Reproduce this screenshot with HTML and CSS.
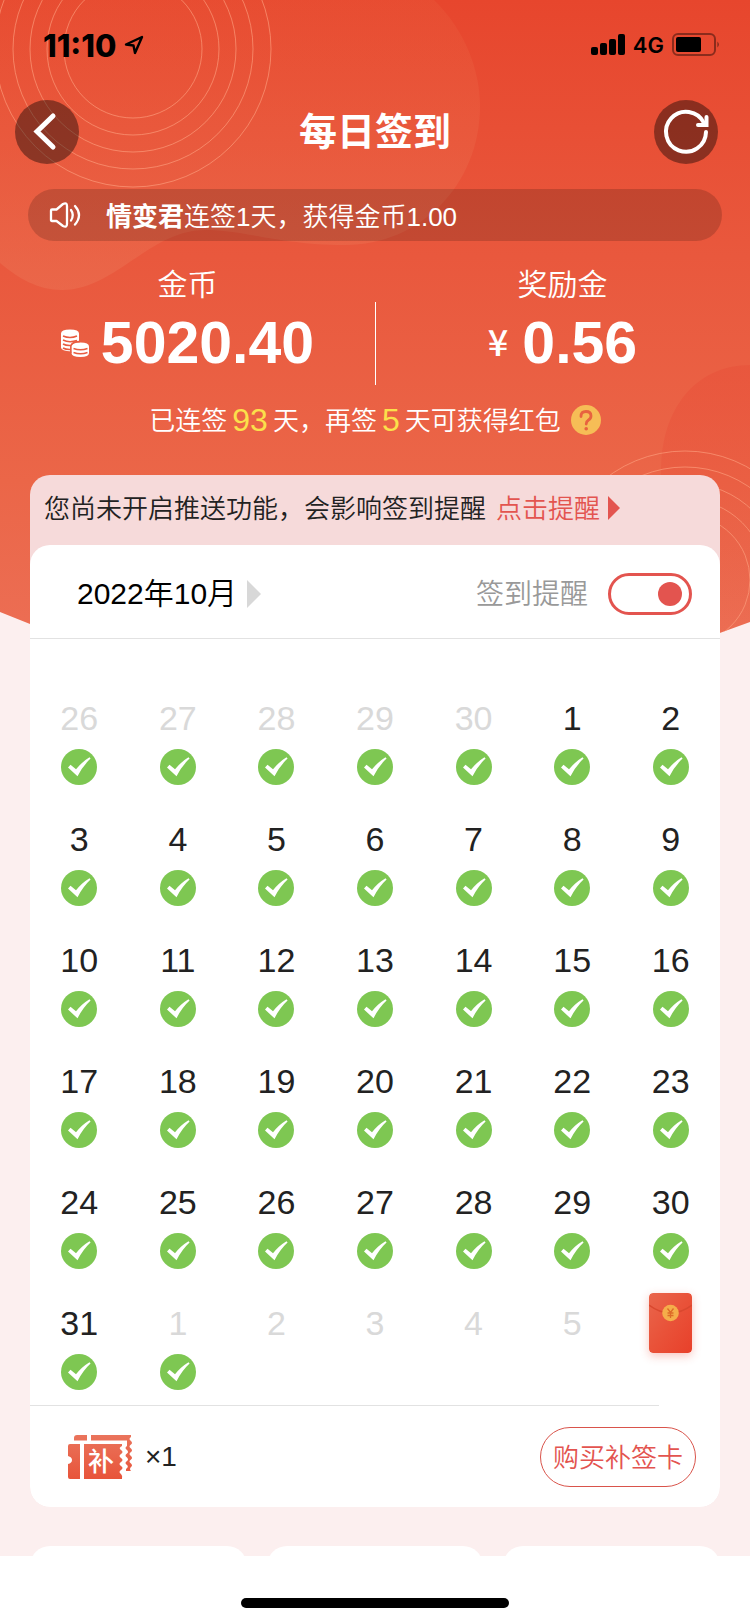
FILE: index.html
```
<!DOCTYPE html>
<html lang="zh-CN">
  <head>
    <meta charset="utf-8" />
    <meta name="viewport" content="width=device-width, initial-scale=1" />
    <title>每日签到</title>
    <link rel="stylesheet" href="styles.css" />
  </head>
  <body>
    <svg class="hero-art" viewBox="0 0 750 640" preserveAspectRatio="none" aria-hidden="true">
      <defs>
        <linearGradient id="hero" x1="0" y1="0" x2="0" y2="1">
          <stop offset="0" stop-color="#e7462d" />
          <stop offset="0.4" stop-color="#e9583d" />
          <stop offset="0.75" stop-color="#eb6648" />
          <stop offset="1" stop-color="#ec6e54" />
        </linearGradient>
        <linearGradient id="blob" x1="0" y1="0" x2="0" y2="1">
          <stop offset="0" stop-color="#e95c3c" stop-opacity="0.3" />
          <stop offset="1" stop-color="#ec7354" stop-opacity="0.5" />
        </linearGradient>
        <linearGradient id="shade" x1="0" y1="0" x2="0" y2="1">
          <stop offset="0" stop-color="#e8523a" stop-opacity="0.6" />
          <stop offset="1" stop-color="#e8523a" stop-opacity="0" />
        </linearGradient>
        <clipPath id="edge">
          <path d="M0 0H750V622L640 662L110 656L0 612Z" />
        </clipPath>
      </defs>
      <g clip-path="url(#edge)">
        <rect width="750" height="640" fill="url(#hero)" />
        <path d="M0 0H434C465 30 480 70 480 106C480 185 420 245 345 245C280 245 245 230 205 230C150 230 115 290 62 290C38 290 18 278 0 263Z" fill="url(#blob)" />
        <path d="M750 365C695 365 661 410 661 470V640H750Z" fill="url(#shade)" />
        <g fill="none" stroke="#ffa584" stroke-opacity="0.6">
          <circle cx="133" cy="49" r="69" />
          <circle cx="133" cy="49" r="86" />
          <circle cx="133" cy="49" r="103" />
          <circle cx="133" cy="49" r="120" />
          <circle cx="133" cy="49" r="138" />
          <circle cx="685" cy="580" r="65" />
          <circle cx="685" cy="580" r="81" />
          <circle cx="685" cy="580" r="97" />
          <circle cx="685" cy="580" r="113" />
          <circle cx="685" cy="580" r="129" />
        </g>
      </g>
    </svg>

    <div class="status-bar">
      <div class="status-left">
        <span class="clock">11:10</span>
        <svg width="20" height="20" viewBox="0 0 20 20">
          <path d="M2 9.500L18 2L11 18L9.500 10.500Z" fill="none" stroke="#000" stroke-width="2.400" stroke-linejoin="round" />
        </svg>
      </div>
      <div class="status-right">
        <svg width="34" height="22" viewBox="0 0 34 22">
          <rect x="0" y="13" width="7" height="8" rx="2" />
          <rect x="9" y="9" width="7" height="12" rx="2" />
          <rect x="18" y="5" width="7" height="16" rx="2" />
          <rect x="27" y="0" width="7" height="21" rx="2" />
        </svg>
        <span class="network">4G</span>
        <svg width="48" height="24" viewBox="0 0 48 24">
          <rect x="1" y="1" width="42" height="21" rx="5" fill="none" stroke="#000" stroke-opacity="0.4" stroke-width="2" />
          <rect x="4" y="4" width="25" height="15" rx="2" />
          <path d="M45.500 8.500Q48 11.500 45.500 14.500Z" fill-opacity="0.55" />
        </svg>
      </div>
    </div>

    <header class="nav">
      <button class="round-button back" aria-label="返回">
        <svg width="64" height="64" viewBox="0 0 64 64">
          <path d="M38 16L22 31.500L38 47" fill="none" stroke="#fff" stroke-width="5" stroke-linecap="round" stroke-linejoin="miter" />
        </svg>
      </button>
      <h1>每日签到</h1>
      <button class="round-button refresh" aria-label="刷新">
        <svg width="64" height="64" viewBox="0 0 64 64">
          <g fill="none" stroke="#fff" stroke-width="4" stroke-linecap="round">
            <path d="M52 32A20 20 0 1 1 50 23" />
            <path d="M52.500 17V25H44" />
          </g>
        </svg>
      </button>
    </header>

    <div class="notice">
      <svg width="34" height="28" viewBox="0 0 34 28">
        <g fill="none" stroke="#fff" stroke-width="2.300" stroke-linecap="round" stroke-linejoin="round">
          <path d="M4 8.500H8.500L15 3Q19 1 19 5V23Q19 27 15 25L8.500 20H4Q3 20 3 19V9.500Q3 8.500 4 8.500Z" />
          <path d="M23 9Q26.500 14 23 19.500" />
          <path d="M27 5Q35 14 27 23.500" />
        </g>
      </svg>
      <p class="notice-text"><b>情变君</b>连签1天，获得金币1.00</p>
    </div>

    <section class="balances">
      <div class="balance">
        <h2>金币</h2>
        <div class="amount">
          <svg width="30" height="30" viewBox="0 0 30 30">
            <g fill="#fff">
              <path d="M0 4.500Q0 0.500 9 0.500Q18 0.500 18 4.500V12Q11 13 10.500 17V22.500Q0 22 0 18.500Z" />
              <path d="M10.500 17.500Q11 13.500 19.500 13.500Q28 13.500 28 17.500V24Q28 28 19.500 28Q10.500 28 10.500 24Z" />
            </g>
            <g fill="none" stroke="#e95c41" stroke-width="1.500">
              <path d="M2 7Q9 10 16 7M2 11Q8 14 16 11.500M2 15Q5 16.800 10 16.500M2 19Q5 20.800 10 20.500" />
              <path d="M12.500 19.500Q19.500 22 26.500 19.500M12.500 23.500Q19.500 26 26.500 23.500" />
              <path d="M9.800 24V17Q11 12.500 19 12.600" />
            </g>
          </svg>
          <strong>5020.40</strong>
        </div>
      </div>
      <div class="balance">
        <h2>奖励金</h2>
        <div class="amount">
          <span class="yuan">¥</span>
          <strong>0.56</strong>
        </div>
      </div>
    </section>

    <div class="streak">
      <span class="cjk-line">已连签</span><em>93</em><span class="cjk-line">天，再签</span><em>5</em><span class="cjk-line">天可获得红包</span>
      <button class="help" aria-label="签到规则">
        <svg width="30" height="30" viewBox="0 0 30 30">
          <circle cx="15" cy="15" r="15" fill="#f6bd56" />
          <path d="M10 11.500Q10 6.500 15 6.500Q20 6.500 20 11Q20 13.500 17.500 15Q15.200 16.500 15.200 19" fill="none" stroke="#e8623f" stroke-width="2.800" stroke-linecap="round" />
          <circle cx="15.200" cy="23.800" r="1.800" fill="#e8623f" />
        </svg>
      </button>
    </div>

    <main class="panel">
      <div class="push-tip">
        <span class="cjk-line">您尚未开启推送功能，会影响签到提醒</span>
        <a href="#"><span class="cjk-line">点击提醒</span></a>
      </div>

      <section class="card">
        <div class="card-head">
          <button class="month"><span class="cjk-line">2022年10月</span></button>
          <label class="remind">
            <span class="cjk-line">签到提醒</span>
            <input type="checkbox" role="switch" checked />
          </label>
        </div>

        <ol class="calendar" id="calendar"></ol>

        <div class="card-foot">
          <svg width="64" height="44" viewBox="0 0 64 44" role="img" aria-label="补签卡">
            <defs>
              <linearGradient id="ticket" gradientUnits="userSpaceOnUse" x1="0" y1="0" x2="0" y2="44">
                <stop offset="0" stop-color="#ea745c" />
                <stop offset="1" stop-color="#e8543a" />
              </linearGradient>
            </defs>
            <g fill="url(#ticket)">
              <path d="M6 5.500V3Q6 0 9 0H19V5.500Z" />
              <path d="M23 0H63V2Q60 4 63 6Q65 8 63 9.500Q60 11.500 63 13.500Q65 15.500 63 17Q60 19 63 21Q65 23 63 24.500Q60 26.500 63 28.500Q65 30.500 63 32Q61 34 63 36H58V34Q61 32 59 30Q56 28 59 26Q61 24.500 59 22.500Q56 20.500 59 18.500Q61 17 59 15Q56 13 59 11V5.500H23Z" />
              <path d="M0 11Q0 9 2 9H12V44H2Q0 44 0 42V29Q4 28 4 25Q4 22 0 21Z" />
              <path d="M16 9H54V11Q50 13 53 15Q56 17 53 19Q50 21 53 23Q56 25 53 27Q50 29 53 31Q56 33 53 35Q50 37 53 39Q55 41 54 44H16Z" />
            </g>
            <text class="ticket-text" x="20" y="36">补</text>
          </svg>
          <span class="ticket-count">×1</span>
          <button class="buy-button">购买补签卡</button>
        </div>
      </section>
    </main>

    <div class="more">
      <div class="more-card"></div>
      <div class="more-card"></div>
      <div class="more-card"></div>
    </div>

    <footer class="home-area">
      <div class="home-bar"></div>
    </footer>

    <template id="check">
      <svg width="36" height="36" viewBox="0 0 36 36" role="img" aria-label="已签到">
        <circle cx="18" cy="18" r="18" fill="#7ec752" />
        <path d="M7 18.500L9.500 15.800L15 20.300Q21 12.800 28.500 8.300L29.600 9.600Q22 16.500 16.500 27.300Z" fill="#fff" />
      </svg>
    </template>

    <template id="envelope">
      <svg class="envelope" width="43" height="60" viewBox="0 0 43 60" role="img" aria-label="红包">
        <defs>
          <linearGradient id="packet" x1="0" y1="0" x2="1" y2="1">
            <stop offset="0" stop-color="#e9664c" />
            <stop offset="0.5" stop-color="#e95239" />
            <stop offset="1" stop-color="#e8402a" />
          </linearGradient>
        </defs>
        <rect width="43" height="60" rx="4" fill="url(#packet)" />
        <path d="M0 12Q21.500 28 43 12" fill="none" stroke="#d9482f" stroke-width="1.500" />
        <circle cx="21.500" cy="20" r="8.300" fill="#f5ad4a" />
        <path d="M18.500 15.500L21.500 19.500L24.500 15.500M21.500 19.500V25M18.500 20H24.500M18.500 22.500H24.500" fill="none" stroke="#dd6a28" stroke-width="1.300" />
      </svg>
    </template>

    <script src="script.js"></script>
  </body>
</html>
```

FILE: styles.css
```
* {
  box-sizing: border-box;
}

body {
  position: relative;
  margin: 0;
  min-height: 100vh;
  display: flex;
  flex-direction: column;
  background-color: #fcefef;
  color: #222;
  font-family: "Liberation Sans", Arial, "Noto Sans CJK SC", sans-serif;
  font-size: 26px;
  font-weight: 350;
}

h1,
h2,
p,
ol {
  margin: 0;
  padding: 0;
  font-weight: inherit;
}

button {
  border: none;
  padding: 0;
  background: none;
  color: inherit;
  font: inherit;
  cursor: pointer;
}

svg {
  display: block;
  flex: none;
}

/* lifts Chinese text to the optical middle of its row */
.cjk-line {
  padding-bottom: 4px;
}

.hero-art {
  position: absolute;
  top: 0;
  left: 0;
  z-index: -1;
  width: 100%;
  height: 640px;
}

.status-bar {
  display: flex;
  justify-content: space-between;
  align-items: center;
  height: 90px;
  padding: 0 30px 0 43px;
  color: #000;
}

.status-left,
.status-right {
  display: flex;
  align-items: center;
  gap: 8px;
}

.clock {
  font-family: Inter, sans-serif;
  font-size: 31px;
  font-weight: 800;
}

.network {
  font-family: Inter, sans-serif;
  font-size: 22px;
  font-weight: 600;
}

.nav {
  display: grid;
  grid-template-columns: 1fr auto 1fr;
  align-items: center;
  height: 84px;
  color: #fff;
}

.nav h1 {
  font-size: 38px;
  font-weight: bold;
  line-height: 56px;
}

.round-button {
  border-radius: 50%;
  background-color: rgba(0, 0, 0, 0.4);
}

.back {
  justify-self: start;
  margin-left: 15px;
}

.refresh {
  justify-self: end;
  margin-right: 32px;
}

.notice {
  display: flex;
  align-items: center;
  gap: 24px;
  height: 52px;
  margin: 15px 28px 0;
  padding: 0 20px;
  border-radius: 26px;
  background-color: rgba(0, 0, 0, 0.16);
  color: #fff;
}

.notice-text {
  padding-bottom: 2px;
}

.notice b {
  font-weight: bold;
}

.balances {
  display: grid;
  grid-template-columns: 1fr 1fr;
  margin-top: 22px;
  color: #fff;
  text-align: center;
}

.balance h2 {
  font-size: 30px;
  line-height: 44px;
}

.balance + .balance {
  background: linear-gradient(#fff, #fff) no-repeat 0 100% / 1px 83px;
}

.amount {
  display: flex;
  justify-content: center;
  gap: 10px;
  height: 78px;
}

.amount svg {
  margin-top: 22px;
}

.amount strong {
  font-size: 59px;
  font-weight: bold;
  line-height: 72px;
}

.yuan {
  margin-right: 4px;
  font-family: "Noto Sans CJK SC", sans-serif;
  font-size: 36px;
  font-weight: 500;
  line-height: 66px;
}

.streak {
  display: flex;
  justify-content: center;
  align-items: center;
  gap: 5px;
  margin-top: 15px;
  height: 40px;
  color: #fff;
}

.streak em {
  color: #fbe04b;
  font-size: 32px;
  font-style: normal;
}

.help {
  margin-left: 5px;
}

.panel {
  margin: 35px 30px 0;
  border-radius: 20px;
  background-color: #f6dada;
}

.push-tip {
  display: flex;
  align-items: center;
  gap: 10px;
  height: 70px;
  padding: 0 14px 4px;
}

.push-tip a {
  display: flex;
  align-items: center;
  gap: 8px;
  color: #e3544f;
  text-decoration: none;
}

.push-tip a::after {
  content: "";
  border: 12px solid transparent;
  border-left-color: #e3544f;
  border-right: none;
}

.card {
  border-radius: 20px;
  background-color: #fff;
}

.card-head {
  display: flex;
  justify-content: space-between;
  align-items: center;
  height: 94px;
  padding: 4px 28px 0 47px;
  border-bottom: 1px solid #e2e2e2;
}

.month {
  display: flex;
  align-items: center;
  gap: 10px;
  color: #000;
  font-size: 30px;
}

.month .cjk-line {
  padding-bottom: 6px;
}

.month::after {
  content: "";
  border: 14px solid transparent;
  border-left-color: #d8d8d8;
  border-right: none;
}

.remind {
  display: flex;
  align-items: center;
  gap: 20px;
  color: #999;
  font-size: 28px;
}

.remind input {
  appearance: none;
  display: flex;
  align-items: center;
  width: 84px;
  height: 42px;
  margin: 0;
  padding: 0 7px;
  border: 3px solid #e3544f;
  border-radius: 21px;
}

.remind input::before {
  content: "";
  width: 24px;
  height: 24px;
  border-radius: 50%;
  background-color: #e3544f;
}

.remind input:checked {
  justify-content: flex-end;
}

.calendar {
  display: grid;
  grid-template-columns: repeat(7, 1fr);
  grid-auto-rows: 121px;
  padding-top: 40px;
  list-style: none;
}

.calendar li {
  display: flex;
  flex-direction: column;
  align-items: center;
  padding-top: 20px;
  font-size: 34px;
  line-height: 38px;
}

.calendar svg {
  margin-top: 12px;
}

.calendar .other {
  color: #d9d9d9;
}

.calendar .envelope {
  margin-top: -11px;
  border-radius: 4px;
  box-shadow: 0 3px 10px rgba(232, 64, 42, 0.3);
}

.card-foot {
  display: flex;
  align-items: center;
  height: 102px;
  padding: 2px 24px 0 38px;
  background: linear-gradient(#e2e2e2, #e2e2e2) no-repeat 0 0 / calc(100% - 61px) 1px;
}

.ticket-text {
  fill: #fff;
  font-family: "Noto Sans CJK SC", sans-serif;
  font-size: 26px;
  font-weight: 500;
}

.ticket-count {
  margin-left: 13px;
  font-size: 28px;
}

.buy-button {
  height: 60px;
  margin-left: auto;
  padding: 0 12px 4px;
  border: 1px solid #d9544b;
  border-radius: 30px;
  color: #e3544f;
}

.more {
  display: grid;
  grid-template-columns: repeat(3, 1fr);
  gap: 20px;
  height: 10px;
  margin-top: 39px;
  padding: 0 30px;
  overflow: hidden;
}

.more-card {
  height: 40px;
  border-radius: 20px;
  background-color: #fff;
}

.home-area {
  display: flex;
  flex: 1;
  justify-content: center;
  align-items: flex-end;
  min-height: 68px;
  padding-bottom: 16px;
  background-color: #fff;
}

.home-bar {
  width: 268px;
  height: 10px;
  border-radius: 5px;
  background-color: #000;
}
```

FILE: script.js
```
const calendar = document.getElementById('calendar')
const check = document.getElementById('check')
const envelope = document.getElementById('envelope')

// first cell is Monday 26 September
const start = new Date(2022, 8, 26)
const checkedDays = 37

for (let i = 0; i < 42; i++) {
  const date = new Date(start)
  date.setDate(start.getDate() + i)

  const cell = document.createElement('li')
  if (date.getMonth() !== 9) {
    cell.className = 'other'
  }

  if (i === 41) {
    cell.append(envelope.content.cloneNode(true))
  } else {
    cell.append(date.getDate())
    if (i < checkedDays) {
      cell.append(check.content.cloneNode(true))
    }
  }
  calendar.append(cell)
}
```
